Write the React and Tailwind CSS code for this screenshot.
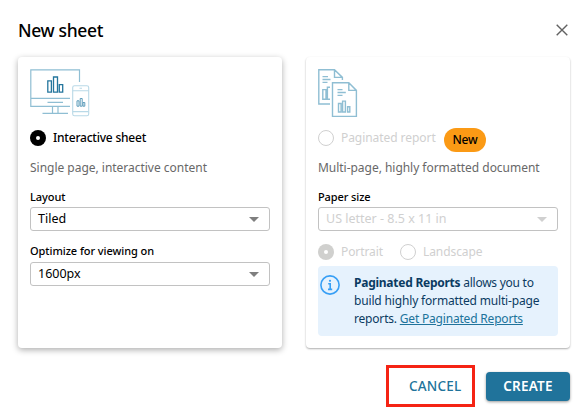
import React from "react";

function DevicesIcon() {
  return (
    <svg width="60" height="48" viewBox="0 0 60 48" fill="none" className="block">
      <g stroke="#8fbed3" strokeWidth="1.2">
        <path d="M49.5 13V.9H.8V37.3H40M.8 29.3H40M17.5 33.3H33M22.5 37.5V44M28 37.5V44M12.5 44.4H38" />
      </g>
      <g stroke="#24769d" strokeWidth="1.3">
        <path d="M17.8 11.8h3.6v11.4h-3.6zM23.5 8h4v15.2h-4zM29.3 15.6h3.4v7.6h-3.4z" />
      </g>
      <g stroke="#b9d9e7" strokeWidth="1.1">
        <rect x="42.7" y="16.7" width="16" height="30" rx="1.8" />
        <path d="M42.7 21.7h16M42.7 42.6h16M49.5 19.2h2.5" />
      </g>
      <path d="M47 31.8h2v5.4h-2zM50.2 29.5h2v7.7h-2zM53 33.5h1.8v3.7H53z" stroke="#5d9dbb" strokeWidth="1" />
    </svg>
  );
}

function ReportsIcon() {
  return (
    <svg width="40" height="49" viewBox="0 0 40 49" fill="none" stroke="#8fbed3" strokeWidth="1.4" className="block">
      <path d="M12 35H.8V.8H16.5L24.4 8.4V11M16.5.8V8.4H24.4M4.5 7.6H10M4.5 10.5H12.5M4.5 13.4H9.5M12 30.2H4.8V20.6H8V30.2M12 30.2H9.4V18.2H12" />
      <path d="M14.5 13.8H30.8L38.4 21.4V47.4H14.5zM30.8 13.8V21.4H38.4M19.5 20.6H24.5M19.5 23.5H27.8M19.5 26.4H24.5M20.5 34.5h2.6v8.5h-2.6zM24.6 32.1h2.8v10.9h-2.8zM29.6 37.7h2.2v5.3h-2.2z" />
    </svg>
  );
}

function Radio({ checked, disabled }) {
  if (checked) {
    return (
      <span className={`flex size-4 shrink-0 items-center justify-center rounded-full ${disabled ? "bg-[#d0d0ce]" : "bg-black"}`}>
        <span className="size-1 rounded-full bg-white" />
      </span>
    );
  }
  return <span className="size-4 shrink-0 rounded-full border border-[#d0d0d0]" />;
}

function Select({ children, disabled }) {
  return (
    <div className={`flex h-6 items-center justify-between rounded-[3px] border border-[#c2c2c2] pl-[7px] pr-[10px] text-[12.5px] ${disabled ? "text-[#d0d0d0]" : "text-black"}`}>
      {children}
      <svg width="10" height="5" viewBox="0 0 10 5" className={disabled ? "fill-[#d0d0d0]" : "fill-[#7f7f7f]"}>
        <path d="M0 0h10L5 5z" />
      </svg>
    </div>
  );
}

export default function App() {
  return (
    <main className="h-[410px] w-[583px] overflow-hidden bg-white pl-[18px] pr-[13px] font-['Noto_Sans','Open_Sans',sans-serif] whitespace-nowrap text-black">
      <header className="flex h-[57px] items-center justify-between pt-0.5 pr-0.5">
        <h1 className="text-[17.5px] leading-6 font-medium tracking-[-0.35px]">New sheet</h1>
        <svg width="12" height="12" viewBox="0 0 12 12" stroke="#626262" strokeWidth="1.4">
          <path d="M.7.7l10.6 10.6M11.3.7L.7 11.3" />
        </svg>
      </header>

      <div className="flex gap-6">
        <section className="h-[291px] w-[264px] rounded-[4px] px-3 pt-3 shadow-[0_2px_6px_rgba(0,0,0,0.32)]">
          <DevicesIcon />
          <div className="mt-[13px] flex h-4 items-center gap-[7px]">
            <Radio checked />
            <span className="text-[12px] font-medium tracking-[-0.22px]">Interactive sheet</span>
          </div>
          <p className="mt-[13px] h-[18px] text-[12px] leading-[18px] tracking-[-0.02px] text-[#686868]">Single page, interactive content</p>
          <p className="mt-[12px] h-4 text-[11px] leading-4 font-medium tracking-[-0.06px]">Layout</p>
          <div className="mt-[2px]"><Select>Tiled</Select></div>
          <p className="mt-[12px] h-4 text-[11px] leading-4 font-medium tracking-[-0.06px]">Optimize for viewing on</p>
          <div className="mt-[3px]"><Select>1600px</Select></div>
        </section>

        <section className="h-[291px] w-[264px] rounded-[4px] px-3 pt-3 shadow-[0_1px_2px_rgba(0,0,0,0.32)]">
          <ReportsIcon />
          <div className="mt-[10px] flex h-6">
            <div className="mt-0.5 flex h-4 items-center gap-[7px]">
              <Radio />
              <span className="w-[94px] text-[12px] tracking-[-0.06px] text-[#d0d0d0]">Paginated report</span>
            </div>
            <span className="ml-[9px] flex h-6 w-[42px] items-center justify-center rounded-full bg-[#fb9a15] text-[12px] font-medium tracking-[-0.2px]">New</span>
          </div>
          <p className="mt-[7px] h-[18px] text-[12px] leading-[18px] tracking-[-0.03px] text-[#686868]">Multi-page, highly formatted document</p>
          <p className="mt-[12px] h-4 text-[11px] leading-4 font-medium tracking-[-0.1px]">Paper size</p>
          <div className="mt-[2px]"><Select disabled>US letter - 8.5 x 11 in</Select></div>
          <div className="mt-[13px] flex h-4 items-center text-[12px] tracking-[-0.08px] text-[#d0d0d0]">
            <div className="flex w-[82px] items-center gap-[7px]"><Radio checked disabled />Portrait</div>
            <div className="flex items-center gap-[7px]"><Radio />Landscape</div>
          </div>
          <div className="mt-[6px] flex h-[70px] rounded-[4px] bg-[#e6f2fd] pt-2 pl-0.5">
            <svg width="20" height="20" viewBox="0 0 20 20" fill="none" className="mt-px shrink-0" stroke="#379ff5" strokeWidth="1.6">
              <circle cx="10" cy="10" r="9.1" />
              <path d="M8.2 8.7H10.2V14.3M8 14.4H12.2" />
              <circle cx="10" cy="5.8" r="1.1" fill="#379ff5" stroke="none" />
            </svg>
            <div className="ml-[14px] text-[12px] leading-[18px] text-[#0b3b62]">
              <p className="tracking-[-0.25px]"><b>Paginated Reports</b> allows you to</p>
              <p className="tracking-[-0.16px]">build highly formatted multi-page</p>
              <p className="tracking-[-0.19px]">reports. <a className="text-[#20739b] underline">Get Paginated Reports</a></p>
            </div>
          </div>
        </section>
      </div>

      <footer className="mt-[17px] flex justify-end gap-[11px]">
        <button className="flex h-[42px] w-[89px] items-center border-[3px] border-[#f52314] pl-5 text-[13.5px] font-medium tracking-[0.2px] text-[#20739b]">CANCEL</button>
        <button className="mt-[7px] flex h-[29px] w-[84px] items-center justify-center rounded-[4px] bg-[#20739b] text-[13.5px] font-semibold tracking-[0.25px] text-white shadow-[0_1px_3px_rgba(0,0,0,0.4)]">CREATE</button>
      </footer>
    </main>
  );
}
